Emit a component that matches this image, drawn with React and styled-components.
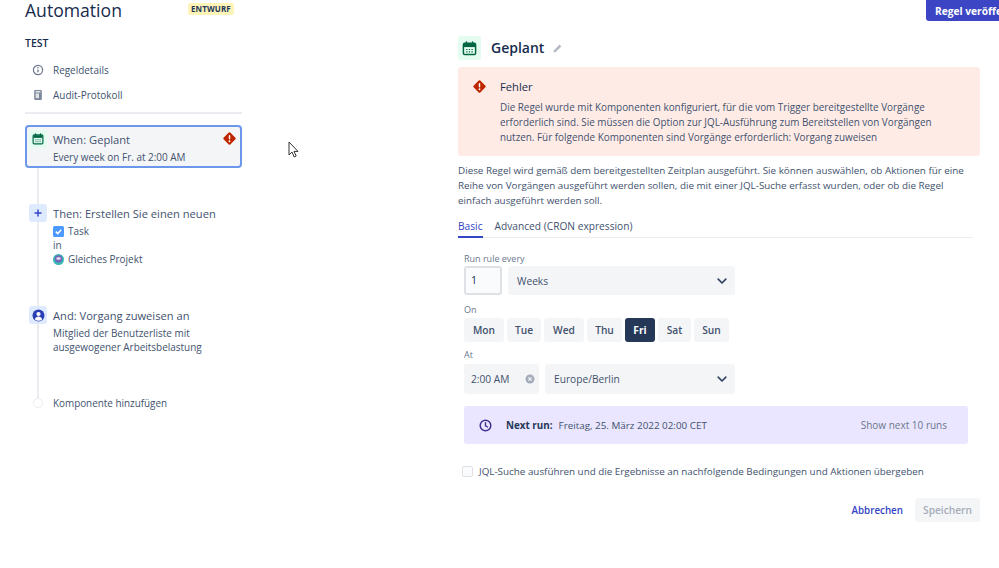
import React from "react";
import styled, { createGlobalStyle } from "styled-components";

const Global = createGlobalStyle`
  html, body { margin: 0; padding: 0; background: #fff; }
  body { font-family: "Open Sans", "Noto Sans", sans-serif; color: #42526e; }
  * { box-sizing: border-box; }
`;

const Page = styled.div`
  position: relative;
  width: 999px;
  height: 568px;
  overflow: hidden;
  background: #fff;
`;
const Columns = styled.div`
  display: flex;
  align-items: flex-start;
`;
const Side = styled.aside`
  flex: 0 0 217px;
  margin-left: 25px;
`;
const TitleRow = styled.div`
  display: flex;
  align-items: flex-start;
  height: 21px;
`;
const PageTitle = styled.h1`
  margin: 1px 0 0;
  font-size: 17.6px;
  line-height: 18px;
  font-weight: 500;
  color: #172b4d;
  width: 163px;
`;
const Badge = styled.span`
  margin-top: 3px;
  height: 12px;
  padding: 0 3px;
  border-radius: 2px;
  background: #fff4b8;
  color: #253858;
  font-size: 8px;
  font-weight: 700;
  line-height: 12px;
  letter-spacing: 0.1px;
`;
const RuleName = styled.div`
  margin-top: 15px;
  font-size: 10.5px;
  line-height: 14px;
  font-weight: 600;
  color: #172b4d;
`;
const NavList = styled.nav`
  margin-top: 10px;
  display: flex;
  flex-direction: column;
  gap: 5px;
  padding-bottom: 7px;
  border-bottom: 2px solid #ebecf0;
`;
const NavItem = styled.div`
  display: flex;
  align-items: center;
  gap: 9px;
  height: 20px;
  padding-left: 7px;
  font-size: 9.95px;
  color: #42526e;
  svg { flex: 0 0 auto; }
`;
const Timeline = styled.div`
  position: relative;
  margin-top: 11px;
  &::before {
    content: "";
    position: absolute;
    left: 12px;
    top: 20px;
    width: 2px;
    height: 256px;
    background: #ebecf0;
  }
`;
const Step = styled.div`
  position: relative;
  display: flex;
  gap: 6px;
  padding: ${p => (p.$active ? "3px 4px 0 2px" : "0 4px 0 4px")};
  height: ${p => p.$h}px;
  margin-bottom: ${p => p.$mb || 0}px;
  ${p => p.$active && `
    border: 2px solid #6c98ec;
    border-radius: 4px;
    background: #f4f5f7;
  `}
`;
const StepIcon = styled.div`
  flex: 0 0 18px;
  width: 18px;
  height: 18px;
  border-radius: 3px;
  background: ${p => p.$bg};
  display: flex;
  align-items: center;
  justify-content: center;
`;
const StepBody = styled.div`
  flex: 1;
  min-width: 0;
`;
const StepHead = styled.div`
  display: flex;
  justify-content: space-between;
  padding-top: 1px;
  font-size: 11.15px;
  line-height: 18px;
  color: #42526e;
  svg { margin-top: 1px; }
`;
const StepLine = styled.div`
  font-size: 9.95px;
  line-height: 14px;
  color: #42526e;
  display: flex;
  align-items: center;
  gap: 4px;
  margin-top: ${p => p.$mt || 0}px;
`;
const AddStep = styled.div`
  position: relative;
  display: flex;
  align-items: center;
  gap: 10px;
  padding-left: 8px;
  font-size: 9.9px;
  line-height: 14px;
  color: #42526e;
`;
const AddDot = styled.span`
  width: 10px;
  height: 10px;
  border-radius: 50%;
  background: #fff;
  border: 1.5px solid #ebecf0;
`;
const Main = styled.main`
  flex: 0 0 522px;
  margin-left: 216px;
  padding-top: 36px;
`;
const MainHead = styled.div`
  display: flex;
  align-items: center;
  height: 24px;
`;
const HeadIcon = styled.div`
  width: 23px;
  height: 24px;
  border-radius: 3px;
  background: #e3fcef;
  display: flex;
  align-items: center;
  justify-content: center;
`;
const MainTitle = styled.h2`
  margin: 0 8px 0 10px;
  font-size: 14px;
  line-height: 24px;
  font-weight: 600;
  color: #172b4d;
`;
const ErrorBox = styled.section`
  margin-top: 7px;
  height: 89px;
  padding: 13px 0 0 15px;
  display: flex;
  gap: 14px;
  background: #ffebe6;
  border-radius: 3px;
`;
const ErrorTitle = styled.div`
  margin-top: -1px;
  font-size: 11.2px;
  line-height: 16px;
  font-weight: 500;
  color: #172b4d;
`;
const ErrorText = styled.p`
  margin: 5px 0 0;
  font-size: 9.9px;
  line-height: 15px;
  color: #42526e;
`;
const Para = styled.p`
  margin: 7px 0 0;
  font-size: 9.85px;
  line-height: 15px;
  color: #42526e;
`;
const Tabs = styled.div`
  margin-top: 10px;
  width: 515px;
  display: flex;
  gap: 12px;
  height: 20px;
  border-bottom: 1.5px solid #ebecf0;
`;
const Tab = styled.div`
  height: 20px;
  font-size: 10.2px;
  line-height: 17px;
  font-weight: 500;
  color: ${p => (p.$on ? "#3344c4" : "#42526e")};
  border-bottom: ${p => (p.$on ? "2px solid #3344c4" : "none")};
`;
const Form = styled.div`
  margin-left: 6px;
  width: 504px;
`;
const FieldLabel = styled.div`
  margin-top: ${p => p.$mt}px;
  font-size: 9px;
  line-height: 12px;
  color: #6b778c;
`;
const FieldRow = styled.div`
  display: flex;
  gap: ${p => p.$gap}px;
  margin-top: ${p => p.$mt}px;
`;
const NumberBox = styled.div`
  width: 38px;
  height: 29px;
  padding-left: 5px;
  border: 2px solid #dfe1e6;
  border-radius: 3px;
  background: #fafbfc;
  font-size: 10.5px;
  line-height: 25px;
  color: #172b4d;
`;
const Select = styled.div`
  width: ${p => p.$w}px;
  height: ${p => p.$h}px;
  padding: 0 ${p => p.$pr}px 0 ${p => p.$pl}px;
  border-radius: 3px;
  background: #f4f5f7;
  display: flex;
  align-items: center;
  justify-content: space-between;
  font-size: 10.2px;
  color: #42526e;
`;
const Days = styled.div`
  display: flex;
  gap: 3px;
  margin-top: 2px;
`;
const Day = styled.div`
  width: ${p => p.$w}px;
  height: 24px;
  border-radius: 3px;
  background: ${p => (p.$on ? "#253858" : "#f4f5f7")};
  color: ${p => (p.$on ? "#fff" : "#42526e")};
  font-size: 10.2px;
  font-weight: ${p => (p.$on ? 700 : 600)};
  line-height: 24px;
  text-align: center;
`;
const NextRun = styled.div`
  margin-top: 12px;
  height: 38px;
  padding: 0 21px 0 15px;
  border-radius: 3px;
  background: #eae6ff;
  display: flex;
  align-items: center;
  font-size: 9.85px;
  color: #42526e;
`;
const NextLabel = styled.strong`
  margin: 0 6px 0 14px;
  font-weight: 700;
  color: #253858;
`;
const NextLink = styled.span`
  margin-left: auto;
  font-size: 10px;
  font-weight: 500;
  color: #6b778c;
`;
const CheckRow = styled.label`
  display: flex;
  align-items: center;
  gap: 6px;
  margin: 21px 0 0 -2px;
  height: 12px;
  font-size: 9.85px;
  white-space: nowrap;
  color: #42526e;
`;
const Check = styled.span`
  width: 11px;
  height: 11px;
  border: 1.5px solid #dfe1e6;
  border-radius: 2px;
  background: #fafbfc;
`;
const Actions = styled.div`
  margin-top: 21px;
  display: flex;
  justify-content: flex-end;
  align-items: center;
  gap: 12px;
`;
const LinkBtn = styled.span`
  font-size: 9.8px;
  font-weight: 600;
  color: #3344c4;
`;
const SaveBtn = styled.span`
  width: 65px;
  height: 24px;
  border-radius: 3px;
  background: #f4f5f7;
  color: #a5adba;
  font-size: 10.2px;
  font-weight: 600;
  line-height: 24px;
  text-align: center;
`;
const Publish = styled.button`
  position: absolute;
  left: 926px;
  top: 0;
  height: 21px;
  width: 100px;
  padding: 0 0 0 9px;
  border: 0;
  border-radius: 0;
  border-bottom-left-radius: 3px;
  background: #3c46c5;
  color: #fff;
  font: 700 10.2px "Open Sans", sans-serif;
  text-align: left;
  white-space: nowrap;
`;
const Cursor = styled.svg`
  position: absolute;
  left: 288px;
  top: 141px;
`;

const Calendar = ({ s = 12, c = "#006644" }) => (
  <svg width={s} height={s} viewBox="0 0 16 16">
    <rect x="1.5" y="2.5" width="13" height="12" rx="1.5" fill="none" stroke={c} strokeWidth="1.6" />
    <path d="M2 3h12v3.5H2z" fill={c} />
    <path d="M4.7 1v3M11.3 1v3" stroke={c} strokeWidth="1.6" strokeLinecap="round" />
    <path d="M4.5 9h1.4M7.3 9h1.4M10.1 9h1.4M4.5 11.6h1.4M7.3 11.6h1.4M10.1 11.6h1.4" stroke={c} strokeWidth="1.2" />
  </svg>
);
const ErrorDiamond = ({ s = 14 }) => (
  <svg width={s} height={s} viewBox="0 0 14 14">
    <path d="M5.9.9a1.5 1.5 0 0 1 2.2 0l5 5a1.5 1.5 0 0 1 0 2.2l-5 5a1.5 1.5 0 0 1-2.2 0l-5-5a1.5 1.5 0 0 1 0-2.2z" fill="#bf2600" />
    <rect x="6.2" y="3.3" width="1.6" height="4.8" rx=".8" fill="#fff" />
    <circle cx="7" cy="10" r="1" fill="#fff" />
  </svg>
);
const Chevron = () => (
  <svg width="12" height="12" viewBox="0 0 12 12">
    <path d="M2.2 4.2 6 8l3.8-3.8" fill="none" stroke="#344563" strokeWidth="1.7" strokeLinecap="round" strokeLinejoin="round" />
  </svg>
);

export default function App() {
  return (
    <Page>
      <Global />
      <Columns>
        <Side>
          <TitleRow>
            <PageTitle>Automation</PageTitle>
            <Badge>ENTWURF</Badge>
          </TitleRow>
          <RuleName>TEST</RuleName>
          <NavList>
            <NavItem>
              <svg width="12" height="12" viewBox="0 0 12 12">
                <circle cx="6" cy="6" r="4.6" fill="none" stroke="#6b778c" strokeWidth="1.2" />
                <path d="M6 5.4v2.8" stroke="#6b778c" strokeWidth="1.3" />
                <circle cx="6" cy="3.8" r=".8" fill="#6b778c" />
              </svg>
              Regeldetails
            </NavItem>
            <NavItem>
              <svg width="12" height="12" viewBox="0 0 12 12">
                <rect x="2.2" y="1" width="7.6" height="10" rx="1" fill="#7a869a" />
                <rect x="3.6" y="2.2" width="4.8" height="1.2" fill="#fff" />
                <rect x="3.6" y="4.4" width="3.4" height="4.8" fill="#dfe1e6" />
              </svg>
              Audit-Protokoll
            </NavItem>
          </NavList>
          <Timeline>
            <Step $active $h={43} $mb={36}>
              <StepIcon $bg="#e3fcef"><Calendar /></StepIcon>
              <StepBody>
                <StepHead>
                  When: Geplant
                  <ErrorDiamond s={13} />
                </StepHead>
                <StepLine $mt={1}>Every week on Fr. at 2:00 AM</StepLine>
              </StepBody>
            </Step>
            <Step $h={102}>
              <StepIcon $bg="#deebff">
                <svg width="10" height="10" viewBox="0 0 10 10">
                  <path d="M5 2v6M2 5h6" stroke="#3344c4" strokeWidth="1.4" strokeLinecap="round" />
                </svg>
              </StepIcon>
              <StepBody>
                <StepHead>Then: Erstellen Sie einen neuen</StepHead>
                <StepLine $mt={1}>
                  <svg width="11" height="11" viewBox="0 0 11 11">
                    <rect width="11" height="11" rx="1.5" fill="#4c9aff" />
                    <path d="M2.8 5.6 4.8 7.6 8.2 3.8" fill="none" stroke="#fff" strokeWidth="1.5" />
                  </svg>
                  Task
                </StepLine>
                <StepLine>in</StepLine>
                <StepLine>
                  <svg width="11" height="11" viewBox="0 0 11 11">
                    <circle cx="5.5" cy="5.5" r="5.5" fill="#36b7b2" />
                    <circle cx="5.5" cy="4.8" r="3.6" fill="#7a5fc0" />
                    <rect x="3.4" y="3.2" width="4.2" height="2.6" rx="1.2" fill="#dfe1e6" />
                  </svg>
                  Gleiches Projekt
                </StepLine>
              </StepBody>
            </Step>
            <Step $h={90}>
              <StepIcon $bg="#deebff">
                <svg width="13" height="13" viewBox="0 0 13 13">
                  <circle cx="6.5" cy="6.5" r="6" fill="#2b3fb5" />
                  <circle cx="6.5" cy="5" r="2.1" fill="#fff" />
                  <path d="M2.8 10.2c.7-1.8 2.1-2.6 3.7-2.6s3 .8 3.7 2.6a5 5 0 0 1-7.4 0z" fill="#fff" />
                </svg>
              </StepIcon>
              <StepBody>
                <StepHead>And: Vorgang zuweisen an</StepHead>
                <StepLine $mt={1}>Mitglied der Benutzerliste mit</StepLine>
                <StepLine>ausgewogener Arbeitsbelastung</StepLine>
              </StepBody>
            </Step>
            <AddStep>
              <AddDot />
              Komponente hinzufügen
            </AddStep>
          </Timeline>
        </Side>
        <Main>
          <MainHead>
            <HeadIcon><Calendar s={15} /></HeadIcon>
            <MainTitle>Geplant</MainTitle>
            <svg width="11" height="11" viewBox="0 0 11 11">
              <path d="M1.5 9.5 2 7.2 7.6 1.6l1.8 1.8L3.8 9z" fill="#b3bac5" />
            </svg>
          </MainHead>
          <ErrorBox>
            <ErrorDiamond s={13} />
            <div>
              <ErrorTitle>Fehler</ErrorTitle>
              <ErrorText>
                Die Regel wurde mit Komponenten konfiguriert, für die vom Trigger bereitgestellte Vorgänge<br />
                erforderlich sind. Sie müssen die Option zur JQL-Ausführung zum Bereitstellen von Vorgängen<br />
                nutzen. Für folgende Komponenten sind Vorgänge erforderlich: Vorgang zuweisen
              </ErrorText>
            </div>
          </ErrorBox>
          <Para>
            Diese Regel wird gemäß dem bereitgestellten Zeitplan ausgeführt. Sie können auswählen, ob Aktionen für eine<br />
            Reihe von Vorgängen ausgeführt werden sollen, die mit einer JQL-Suche erfasst wurden, oder ob die Regel<br />
            einfach ausgeführt werden soll.
          </Para>
          <Tabs>
            <Tab $on>Basic</Tab>
            <Tab>Advanced (CRON expression)</Tab>
          </Tabs>
          <Form>
            <FieldLabel $mt={15}>Run rule every</FieldLabel>
            <FieldRow $gap={6} $mt={1}>
              <NumberBox>1</NumberBox>
              <Select $w={227} $h={29} $pl={9} $pr={7}>Weeks<Chevron /></Select>
            </FieldRow>
            <FieldLabel $mt={9}>On</FieldLabel>
            <Days>
              <Day $w={40}>Mon</Day>
              <Day $w={34}>Tue</Day>
              <Day $w={40}>Wed</Day>
              <Day $w={35}>Thu</Day>
              <Day $w={30} $on>Fri</Day>
              <Day $w={33}>Sat</Day>
              <Day $w={35}>Sun</Day>
            </Days>
            <FieldLabel $mt={7}>At</FieldLabel>
            <FieldRow $gap={6} $mt={3}>
              <Select $w={75} $h={30} $pl={7} $pr={4}>
                2:00 AM
                <svg width="10" height="10" viewBox="0 0 10 10">
                  <circle cx="5" cy="5" r="4.5" fill="#a5adba" />
                  <path d="M3.4 3.4 6.6 6.6M6.6 3.4 3.4 6.6" stroke="#f4f5f7" strokeWidth="1.2" />
                </svg>
              </Select>
              <Select $w={190} $h={30} $pl={9} $pr={7}>Europe/Berlin<Chevron /></Select>
            </FieldRow>
            <NextRun>
              <svg width="13" height="13" viewBox="0 0 13 13">
                <circle cx="6.5" cy="6.5" r="5.3" fill="none" stroke="#403294" strokeWidth="1.5" />
                <path d="M6.5 3.6v3.2l2 1.2" fill="none" stroke="#403294" strokeWidth="1.4" strokeLinecap="round" />
              </svg>
              <NextLabel>Next run:</NextLabel>
              Freitag, 25. März 2022 02:00 CET
              <NextLink>Show next 10 runs</NextLink>
            </NextRun>
            <CheckRow>
              <Check />
              JQL-Suche ausführen und die Ergebnisse an nachfolgende Bedingungen und Aktionen übergeben
            </CheckRow>
          </Form>
          <Actions>
            <LinkBtn>Abbrechen</LinkBtn>
            <SaveBtn>Speichern</SaveBtn>
          </Actions>
        </Main>
      </Columns>
      <Publish>Regel veröffentlichen</Publish>
      <Cursor width="12" height="18" viewBox="0 0 12 18">
        <path d="M1 1v13l3-3 2.2 5 2-1-2.2-4.6H10z" fill="#fff" stroke="#333" strokeWidth="1" />
      </Cursor>
    </Page>
  );
}
